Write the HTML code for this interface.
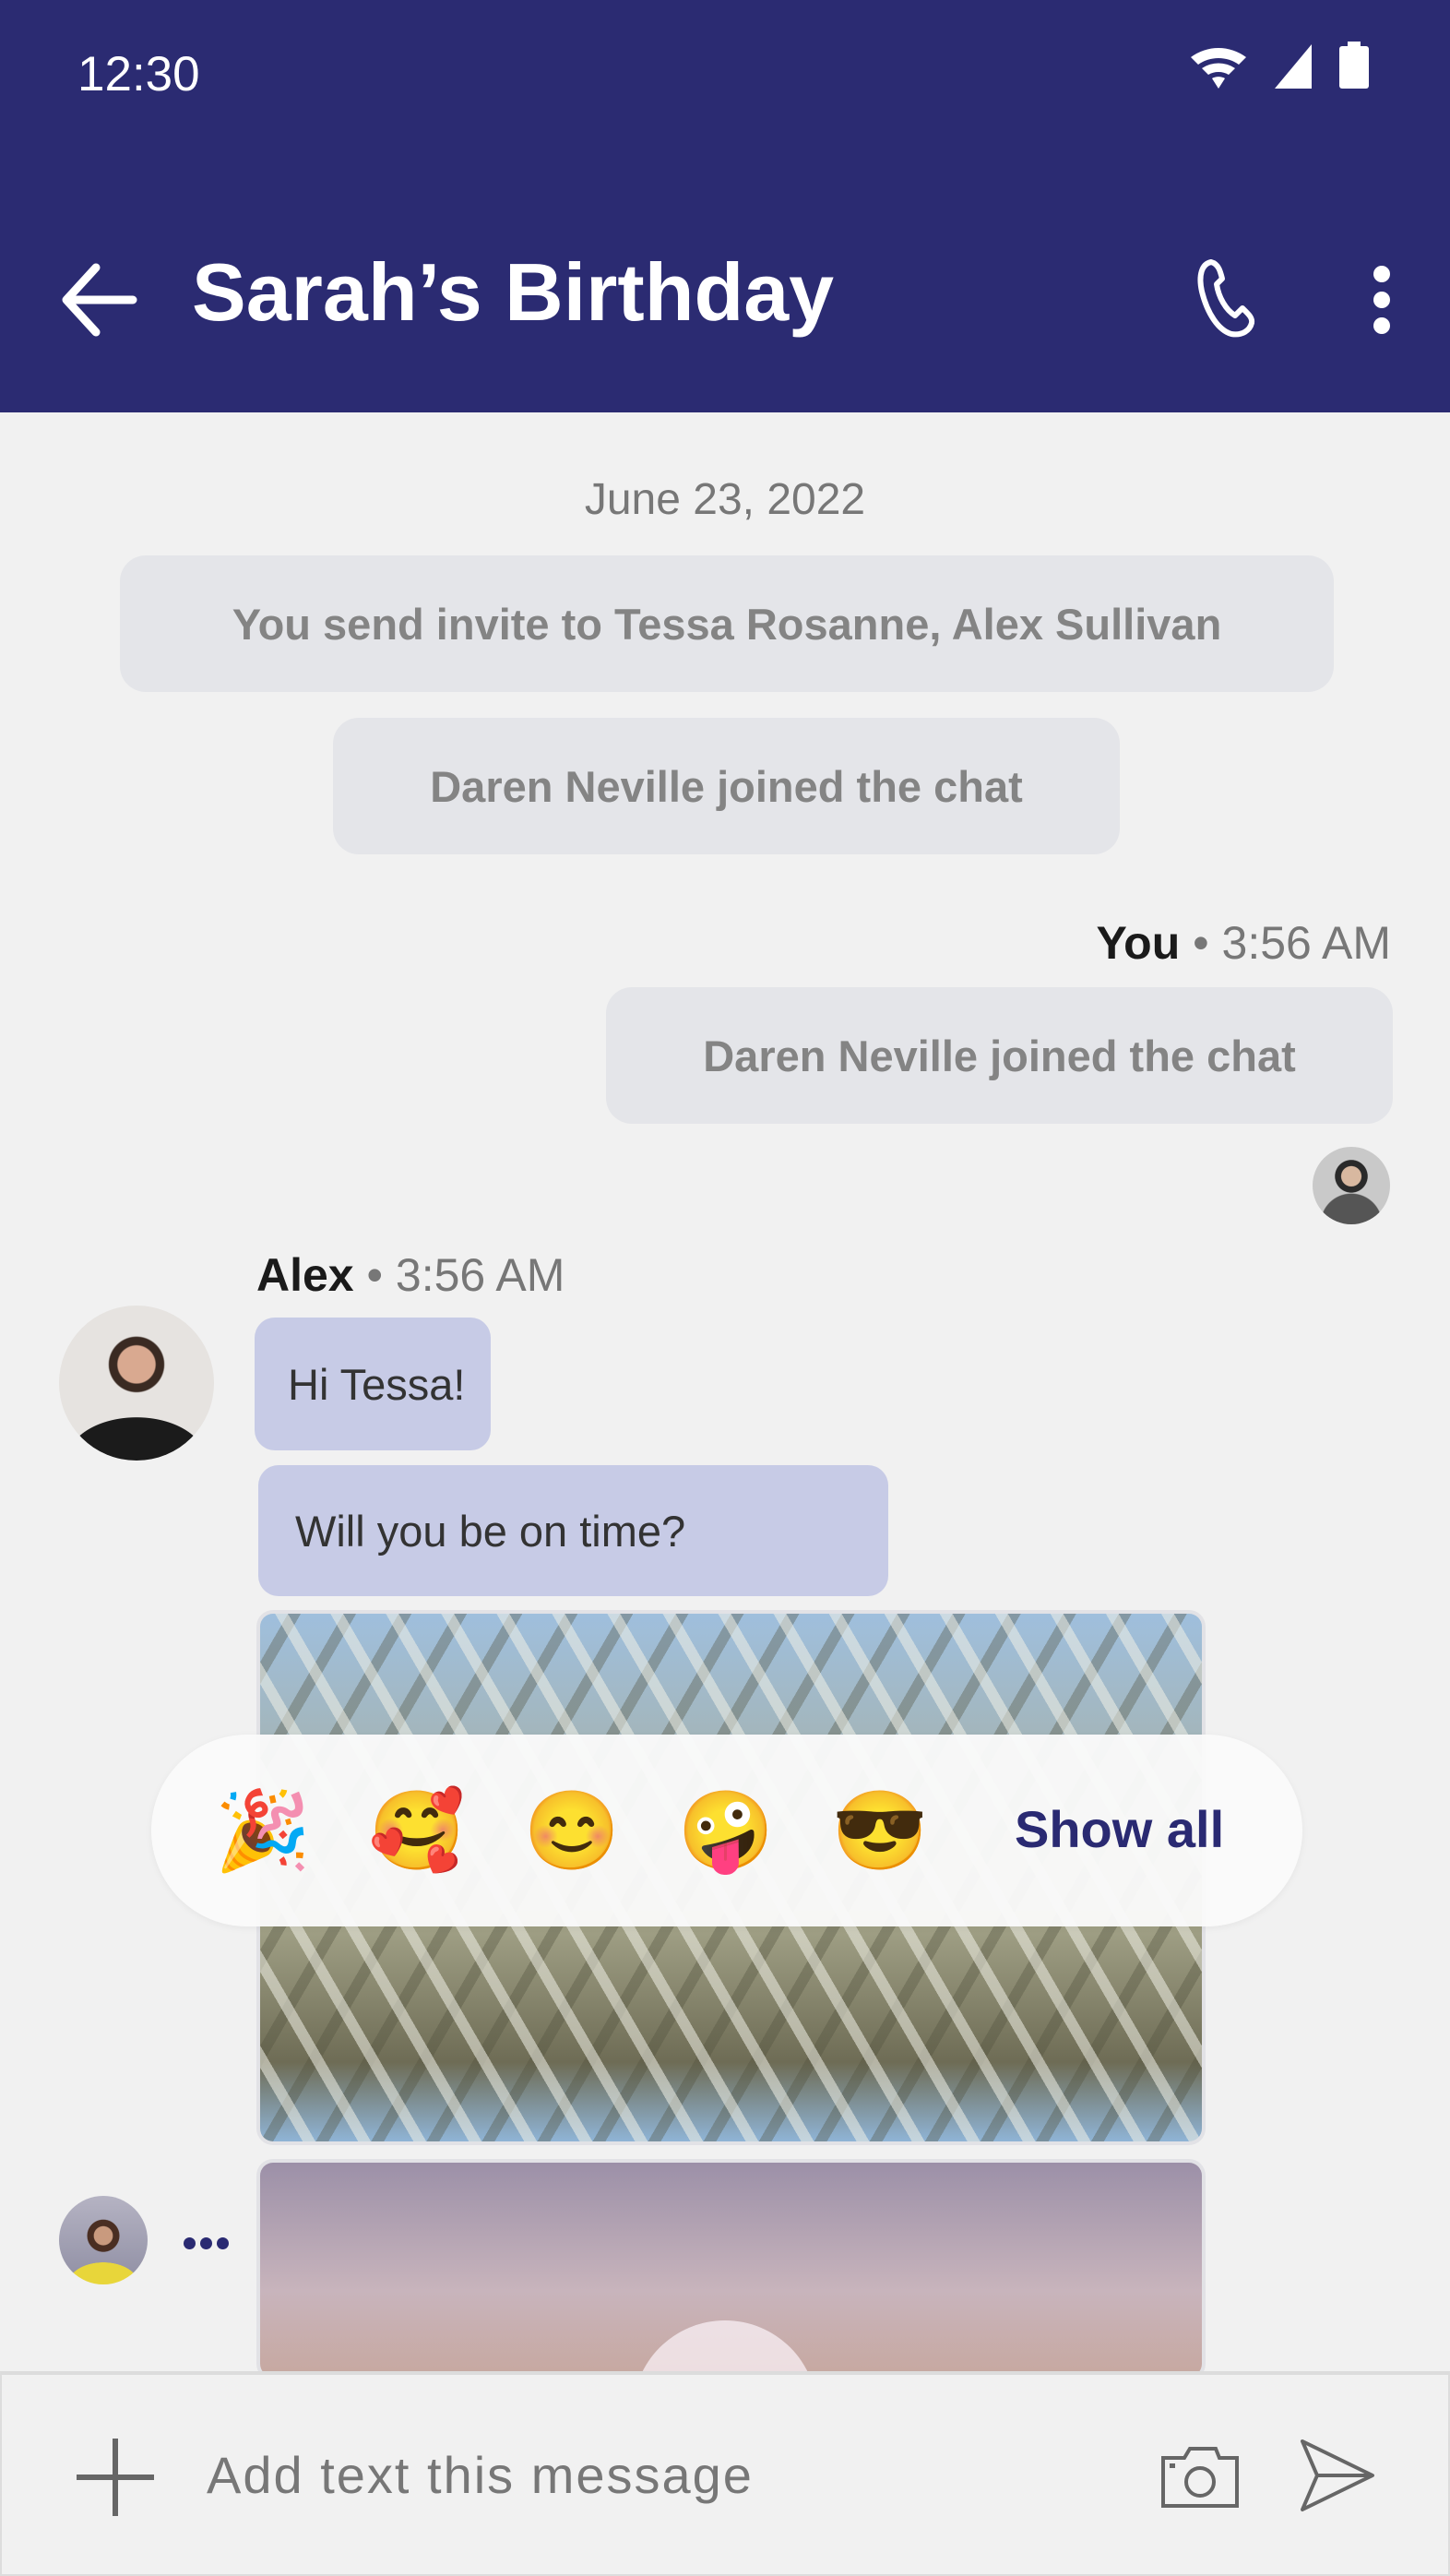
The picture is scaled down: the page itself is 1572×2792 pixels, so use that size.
<!DOCTYPE html>
<html><head><meta charset="utf-8"><style>
*{margin:0;padding:0;box-sizing:border-box}
body{width:1572px;height:2792px;background:#f1f1f1;font-family:"Liberation Sans",sans-serif;position:relative;overflow:hidden}
.a{position:absolute}
.hdr{left:0;top:0;width:1572px;height:447px;background:#2b2b72}
.sys{background:#e4e5e9;border-radius:28px;color:#848484;font-weight:bold;font-size:47px;display:flex;align-items:center;justify-content:center}
.msg{background:#c7cbe6;border-radius:22px;color:#333;font-size:47px;display:flex;align-items:center;padding-left:36px}
.av{border-radius:50%;overflow:hidden}
.em{position:absolute;top:1935px;width:120px;text-align:center;font-size:84px;line-height:100px;font-family:'Noto Color Emoji',sans-serif}
</style></head><body>
<div class="a hdr"></div>
<div class="a" style="left:84px;top:50px;color:#fff;font-size:53px">12:30</div>
<svg class="a" style="left:1285px;top:40px" width="220" height="60" viewBox="0 0 220 60">
<path d="M6 22 A50 50 0 0 1 66 22 L58 30 A38 38 0 0 0 14 30Z" fill="#fff"/>
<path d="M18 34 A32 32 0 0 1 54 34 L47 41 A22 22 0 0 0 25 41Z" fill="#fff"/>
<path d="M29 45 A14 14 0 0 1 43 45 L36 56Z" fill="#fff"/>
<path d="M97 56 L137 8 L137 56Z" fill="#fff"/>
<rect x="167" y="10" width="32" height="46" rx="3" fill="#fff"/><rect x="176" y="5" width="14" height="8" fill="#fff"/>
</svg>
<svg class="a" style="left:60px;top:280px" width="90" height="90" viewBox="0 0 90 90"><path d="M44 10 L12 45 L44 80 M12 45 H84" stroke="#fff" stroke-width="9" fill="none" stroke-linecap="round" stroke-linejoin="round"/></svg>
<div class="a" style="left:208px;top:266px;color:#fff;font-size:88px;font-weight:bold">Sarah’s Birthday</div>
<svg class="a" style="left:1295px;top:278px" width="80" height="90" viewBox="0 0 80 90"><path d="M18 6 C8 8 4 20 8 38 C14 62 26 80 40 84 C52 86 60 80 62 72 C63 66 58 62 52 56 L44 64 C34 58 26 44 24 30 L30 24 C28 16 26 8 18 6Z" stroke="#fff" stroke-width="6" fill="none" stroke-linejoin="round"/></svg>
<div class="a" style="left:1489px;top:288px;width:18px;height:18px;border-radius:50%;background:#fff"></div>
<div class="a" style="left:1489px;top:316px;width:18px;height:18px;border-radius:50%;background:#fff"></div>
<div class="a" style="left:1489px;top:344px;width:18px;height:18px;border-radius:50%;background:#fff"></div>

<div class="a" style="left:0;width:1572px;top:514px;text-align:center;color:#777;font-size:48px">June 23, 2022</div>
<div class="a sys" style="left:130px;top:602px;width:1316px;height:148px">You send invite to Tessa Rosanne, Alex Sullivan</div>
<div class="a sys" style="left:361px;top:778px;width:853px;height:148px">Daren Neville joined the chat</div>
<div class="a" style="right:64px;top:993px;font-size:50px;color:#777"><b style="color:#1a1a1a">You</b> • 3:56 AM</div>
<div class="a sys" style="left:657px;top:1070px;width:853px;height:148px">Daren Neville joined the chat</div>
<div class="a av" style="left:1423px;top:1243px;width:84px;height:84px;background:radial-gradient(circle at 50% 38%,#d8b8a0 0 16%,#2a2a2a 17% 26%,transparent 27%),radial-gradient(circle at 50% 100%,#555 0 35%,#c9c9c9 36%)"></div>
<div class="a" style="left:278px;top:1353px;font-size:50px;color:#777"><b style="color:#1a1a1a">Alex</b> • 3:56 AM</div>
<div class="a av" style="left:64px;top:1415px;width:168px;height:168px;background:radial-gradient(ellipse 45% 28% at 50% 100%,#1b1b1b 0 99%,transparent 100%),radial-gradient(circle at 50% 38%,#d9a990 0 15%,#3a2a22 16% 22%,transparent 23%),#e6e3e0"></div>
<div class="a msg" style="left:276px;top:1428px;width:256px;height:144px">Hi Tessa!</div>
<div class="a msg" style="left:280px;top:1588px;width:683px;height:142px;padding-left:40px">Will you be on time?</div>

<div class="a" style="left:278px;top:1745px;width:1029px;height:580px;border-radius:18px;background:#e2e2e6;padding:4px">
<div style="width:100%;height:100%;border-radius:14px;overflow:hidden;background:repeating-linear-gradient(60deg,transparent 0 40px,rgba(240,240,230,.55) 40px 52px),repeating-linear-gradient(-60deg,transparent 0 40px,rgba(80,80,60,.35) 40px 52px),linear-gradient(180deg,#9fbfdd 0%,#a9a98e 55%,#6e6c55 85%,#8fb4d6 100%)"></div></div>
<div class="a" style="left:278px;top:2340px;width:1029px;height:240px;border-radius:18px;background:#e2e2e6;padding:4px">
<div style="width:100%;height:100%;border-radius:14px;background:linear-gradient(180deg,#9c90a8,#c8b4bc 60%,#c7a8a0)"></div></div>
<div class="a" style="left:686px;top:2515px;width:200px;height:200px;border-radius:50%;background:rgba(250,240,245,.75)"></div>

<div class="a" style="left:164px;top:1880px;width:1248px;height:208px;border-radius:104px;background:rgba(250,250,250,.96);box-shadow:0 2px 8px rgba(0,0,0,.05)"></div>
<div class="em" style="left:225px">🎉</div>
<div class="em" style="left:392px">🥰</div>
<div class="em" style="left:560px">😊</div>
<div class="em" style="left:727px">🤪</div>
<div class="em" style="left:894px">😎</div>
<div class="a" style="left:1100px;top:1950px;font-size:56px;font-weight:bold;color:#2a2a72">Show all</div>

<div class="a av" style="left:64px;top:2380px;width:96px;height:96px;background:radial-gradient(ellipse 40% 25% at 50% 100%,#e8d63a 0 99%,transparent 100%),radial-gradient(circle at 50% 45%,#c99a7e 0 14%,#4a2e22 15% 24%,transparent 25%),linear-gradient(#b5b3c3,#8f8ea3)"></div>
<div class="a" style="left:199px;top:2425px;width:13px;height:13px;border-radius:50%;background:#2a2a72"></div>
<div class="a" style="left:217px;top:2425px;width:13px;height:13px;border-radius:50%;background:#2a2a72"></div>
<div class="a" style="left:235px;top:2425px;width:13px;height:13px;border-radius:50%;background:#2a2a72"></div>

<div class="a" style="left:0;top:2570px;width:1572px;height:222px;background:#f1f1f1;border-top:4px solid #dcdcdc;border-left:2px solid #ddd;border-right:2px solid #ddd;border-bottom:2px solid #ddd"></div>
<svg class="a" style="left:80px;top:2640px" width="90" height="90" viewBox="0 0 90 90"><path d="M45 3 V87 M3 45 H87" stroke="#666" stroke-width="6"/></svg>
<div class="a" style="left:224px;top:2650px;font-size:56px;color:#777;letter-spacing:2px">Add text this message</div>
<svg class="a" style="left:1258px;top:2650px" width="86" height="70" viewBox="0 0 86 70"><path d="M3 14 H26 L32 4 H60 L64 14 H83 V66 H3Z" fill="none" stroke="#666" stroke-width="4"/><circle cx="43" cy="40" r="15" fill="none" stroke="#666" stroke-width="4"/><rect x="10" y="20" width="6" height="5" fill="#666"/></svg>
<svg class="a" style="left:1408px;top:2642px" width="84" height="82" viewBox="0 0 84 82"><path d="M4 4 L80 41 L4 78 L20 41Z M20 41 H80" fill="none" stroke="#666" stroke-width="4" stroke-linejoin="round"/></svg>
</body></html>
